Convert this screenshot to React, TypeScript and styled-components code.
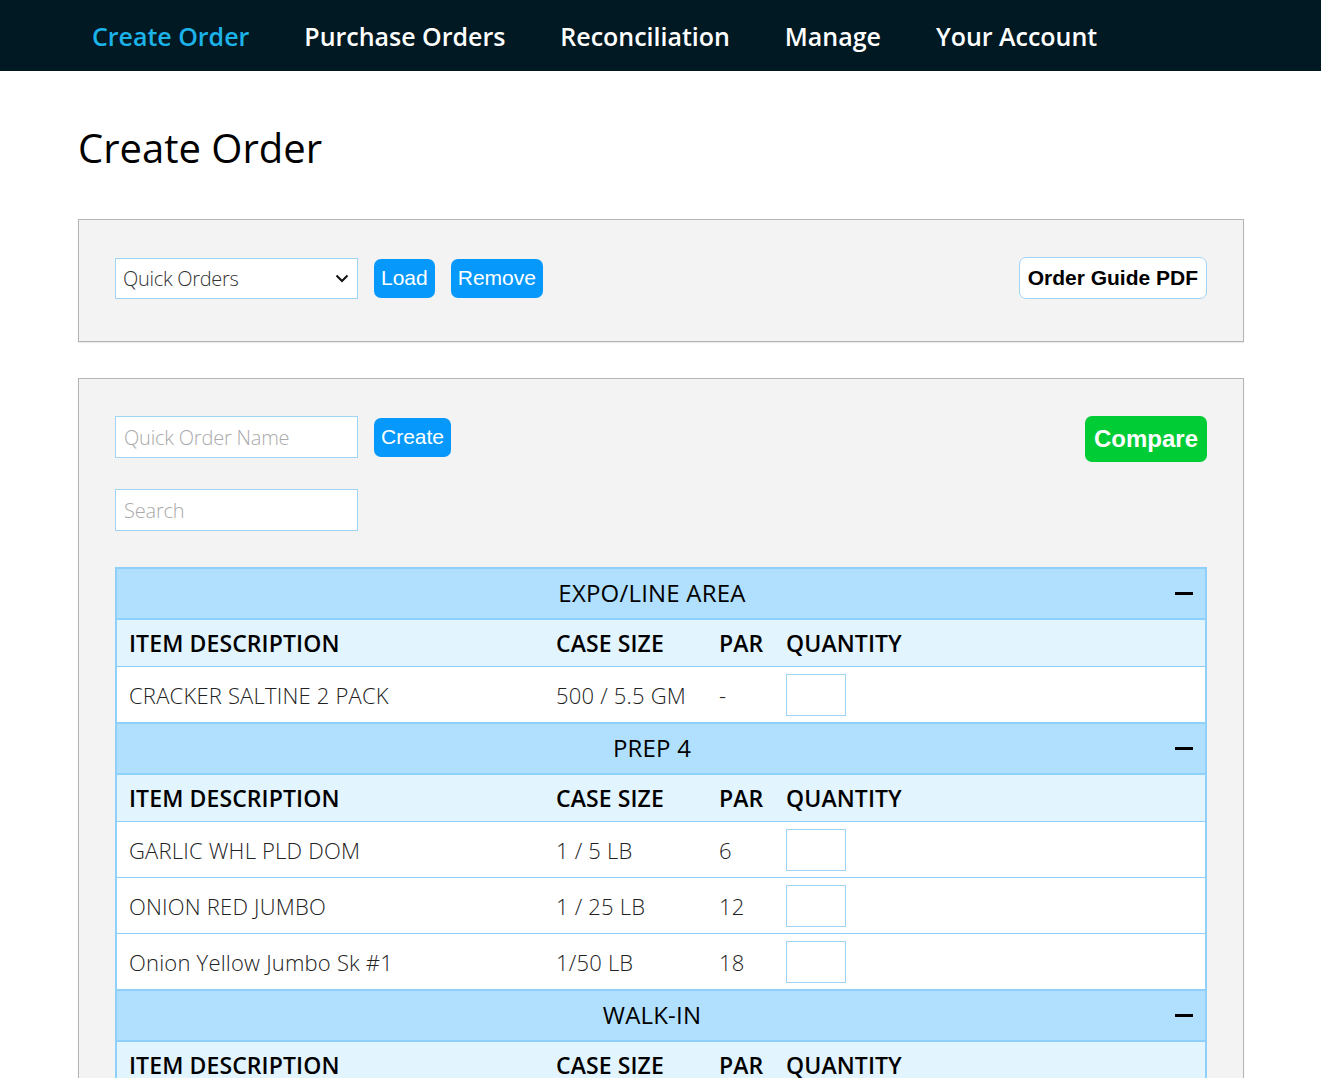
import React from "react";
import styled, { createGlobalStyle } from "styled-components";

const Global = createGlobalStyle`
  html, body { margin: 0; padding: 0; background: #fff; }
  body { font-family: "Open Sans", "Noto Sans", sans-serif; color: #000; }
  * { box-sizing: border-box; }
`;

const Nav = styled.nav`
  height: 71px;
  background: #011923;
  display: flex;
  align-items: center;
  padding-left: 92px;
  gap: 55px;
`;

const NavItem = styled.a<{ $active?: boolean }>`
  font-family: "Open Sans", sans-serif;
  font-weight: 600;
  font-size: 25px;
  letter-spacing: -0.02px;
  color: ${(p) => (p.$active ? "#1bb3e9" : "#ffffff")};
  text-decoration: none;
  margin-top: 1px;
`;

const Main = styled.main`
  padding: 0 77px 0 78px;
`;

const Title = styled.h1`
  margin: 0;
  padding: 50px 0 44px;
  font-size: 40px;
  font-weight: 500;
  letter-spacing: 0px;
  line-height: 54px;
`;

const Panel = styled.section`
  background: #f3f3f3;
  border: 1px solid #b4b4b4;
  box-shadow: 0 1px 1px rgba(0, 0, 0, 0.08);
  padding: 37px 36px 42px;
  margin-bottom: 36px;
`;

const Row = styled.div<{ $mb?: number; $top?: boolean }>`
  display: flex;
  align-items: ${(p) => (p.$top ? "flex-start" : "center")};
  gap: 16px;
  margin-bottom: ${(p) => p.$mb ?? 0}px;
`;

const Spacer = styled.div`
  flex: 1;
`;

const Select = styled.div`
  width: 243px;
  height: 41px;
  background: #fff;
  border: 1px solid #9fd4f5;
  display: flex;
  align-items: center;
  justify-content: space-between;
  padding: 0 8px 0 7px;
  font-size: 20px;
  font-weight: 300;
  color: #333;
  letter-spacing: -0.3px;
`;

const Input = styled.input`
  width: 243px;
  height: 42px;
  background: #fff;
  border: 1px solid #9fd4f5;
  padding: 0 8px;
  font-family: "Open Sans", sans-serif;
  font-size: 20px;
  font-weight: 300;
  letter-spacing: -0.2px;
  outline: none;
  &::placeholder { color: #aaa; }
`;

const Button = styled.button<{ $variant?: "blue" | "green" | "white" }>`
  font-family: "Liberation Sans", Arial, sans-serif;
  font-size: ${(p) => (p.$variant === "green" ? "24px" : "21px")};
  font-weight: ${(p) => (p.$variant === "blue" || !p.$variant ? 400 : 700)};
  height: ${(p) => (p.$variant === "green" ? "46px" : p.$variant === "white" ? "42px" : "39px")};
  padding: 0 ${(p) => (p.$variant === "green" ? "9px" : p.$variant === "white" ? "8px" : "7px")};
  border-radius: 7px;
  cursor: pointer;
  color: ${(p) => (p.$variant === "white" ? "#000" : "#fff")};
  background: ${(p) => (p.$variant === "green" ? "#00cc36" : p.$variant === "white" ? "#fff" : "#0699fb")};
  border: ${(p) => (p.$variant === "white" ? "1px solid #9fd4f5" : "none")};
`;

const Table = styled.div`
  border-left: 2px solid #8fd0fa;
  border-right: 2px solid #8fd0fa;
  margin-top: 36px;
`;

const GroupHead = styled.div`
  position: relative;
  height: 53px;
  background: #b0e0fe;
  border-top: 2px solid #8fd0fa;
  border-bottom: 2px solid #8fd0fa;
  display: flex;
  align-items: center;
  justify-content: center;
  padding-right: 18px;
  padding-bottom: 2px;
  font-size: 24px;
  font-weight: 500;
  letter-spacing: 0.2px;
`;

const Minus = styled.span`
  position: absolute;
  right: 12px;
  top: 50%;
  width: 18px;
  height: 3px;
  margin-top: -2px;
  background: #000;
`;

const Grid = styled.div<{ $head?: boolean; $last?: boolean }>`
  display: grid;
  grid-template-columns: 427px 163px 67px 1fr;
  align-items: center;
  height: ${(p) => (p.$head ? "47px" : p.$last ? "55px" : "56px")};
  background: ${(p) => (p.$head ? "#e2f4fe" : "#fff")};
  border-bottom: ${(p) => (p.$last ? "none" : "1px solid #8fd0fa")};
  font-size: ${(p) => (p.$head ? "23px" : "22px")};
  font-weight: ${(p) => (p.$head ? 600 : 300)};
  color: ${(p) => (p.$head ? "#000" : "#222")};
  letter-spacing: ${(p) => (p.$head ? "0.1px" : "0.2px")};
`;

const Cell = styled.div`
  padding-left: 12px;
  white-space: nowrap;
`;

const QtyBox = styled.input`
  display: block;
  width: 60px;
  height: 42px;
  border: 1px solid #9fd4f5;
  background: #fff;
  outline: none;
`;

type Item = { name: string; size: string; par: string };
const groups: { title: string; items: Item[] }[] = [
  { title: "EXPO/LINE AREA", items: [{ name: "CRACKER SALTINE 2 PACK", size: "500 / 5.5 GM", par: "-" }] },
  {
    title: "PREP 4",
    items: [
      { name: "GARLIC WHL PLD DOM", size: "1 / 5 LB", par: "6" },
      { name: "ONION RED JUMBO", size: "1 / 25 LB", par: "12" },
      { name: "Onion Yellow Jumbo Sk #1", size: "1/50 LB", par: "18" },
    ],
  },
  { title: "WALK-IN", items: [] },
];

const Chevron = () => (
  <svg width="14" height="9" viewBox="0 0 14 9">
    <path d="M1.5 1.5 L7 7 L12.5 1.5" fill="none" stroke="#111" strokeWidth="2" />
  </svg>
);

export default function App() {
  return (
    <>
      <Global />
      <Nav>
        <NavItem $active>Create Order</NavItem>
        <NavItem>Purchase Orders</NavItem>
        <NavItem>Reconciliation</NavItem>
        <NavItem>Manage</NavItem>
        <NavItem>Your Account</NavItem>
      </Nav>
      <Main>
        <Title>Create Order</Title>
        <Panel>
          <Row>
            <Select>
              <span>Quick Orders</span>
              <Chevron />
            </Select>
            <Button $variant="blue">Load</Button>
            <Button $variant="blue">Remove</Button>
            <Spacer />
            <Button $variant="white">Order Guide PDF</Button>
          </Row>
        </Panel>
        <Panel>
          <Row $mb={27} $top>
            <Row>
              <Input placeholder="Quick Order Name" />
              <Button $variant="blue">Create</Button>
            </Row>
            <Spacer />
            <Button $variant="green">Compare</Button>
          </Row>
          <Row>
            <Input placeholder="Search" />
          </Row>
          <Table>
            {groups.map((g) => (
              <React.Fragment key={g.title}>
                <GroupHead>
                  {g.title}
                  <Minus />
                </GroupHead>
                <Grid $head>
                  <Cell>ITEM DESCRIPTION</Cell>
                  <Cell>CASE SIZE</Cell>
                  <Cell>PAR</Cell>
                  <Cell>QUANTITY</Cell>
                </Grid>
                {g.items.map((it, i) => (
                  <Grid key={it.name} $last={i === g.items.length - 1}>
                    <Cell>{it.name}</Cell>
                    <Cell>{it.size}</Cell>
                    <Cell>{it.par}</Cell>
                    <Cell>
                      <QtyBox />
                    </Cell>
                  </Grid>
                ))}
              </React.Fragment>
            ))}
            <Grid>
              <Cell>&nbsp;</Cell>
            </Grid>
          </Table>
        </Panel>
      </Main>
    </>
  );
}
